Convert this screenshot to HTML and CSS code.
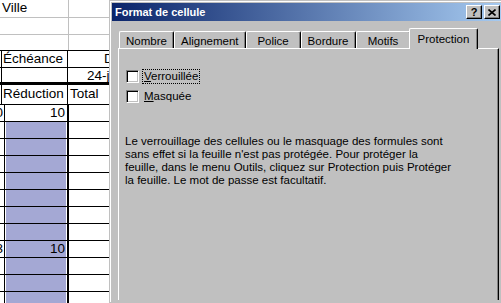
FILE: index.html
```html
<!DOCTYPE html>
<html lang="fr">
<head>
    <meta charset="UTF-8">
    <meta name="viewport" content="width=device-width, initial-scale=1.0">
    <title>Format de cellule</title>
    <link rel="stylesheet" href="styles.css">
</head>
<body>
    <div class="screen">
        <div class="sheet">
            <div class="row grey r1"><div class="cell a">Ville</div><div class="cell b"></div></div>
            <div class="row grey r2"><div class="cell a"></div><div class="cell b"></div></div>
            <div class="row grey r3"><div class="cell a"></div><div class="cell b"></div></div>
            <div class="row boxed r4"><div class="cell a">Échéance</div><div class="cell b date">Date</div></div>
            <div class="row boxed r5"><div class="cell a"></div><div class="cell b due">24-janv</div></div>
            <div class="row boxed r6"><div class="cell a">Réduction</div><div class="cell b">Total</div></div>
            <div class="row sel"><div class="cell pre">0</div><div class="cell a active">10</div><div class="cell b"></div></div>
            <div class="row sel"><div class="cell pre"></div><div class="cell a"></div><div class="cell b"></div></div>
            <div class="row sel"><div class="cell pre"></div><div class="cell a"></div><div class="cell b"></div></div>
            <div class="row sel"><div class="cell pre"></div><div class="cell a"></div><div class="cell b"></div></div>
            <div class="row sel"><div class="cell pre"></div><div class="cell a"></div><div class="cell b"></div></div>
            <div class="row sel"><div class="cell pre"></div><div class="cell a"></div><div class="cell b"></div></div>
            <div class="row sel"><div class="cell pre"></div><div class="cell a"></div><div class="cell b"></div></div>
            <div class="row sel"><div class="cell pre"></div><div class="cell a"></div><div class="cell b"></div></div>
            <div class="row sel"><div class="cell pre">3</div><div class="cell a">10</div><div class="cell b"></div></div>
            <div class="row sel"><div class="cell pre"></div><div class="cell a"></div><div class="cell b"></div></div>
            <div class="row sel"><div class="cell pre"></div><div class="cell a"></div><div class="cell b"></div></div>
            <div class="row sel"><div class="cell pre"></div><div class="cell a"></div><div class="cell b"></div></div>
        </div>

        <div class="dialog">
            <div class="titlebar">
                <span class="title">Format de cellule</span>
                <span class="caption-btn help-btn">?</span>
                <span class="caption-btn">
                    <svg width="8" height="7" viewBox="0 0 8 7"><path d="M0.5 0.5 L7.5 6.5 M7.5 0.5 L0.5 6.5" stroke="#000" stroke-width="1.6" fill="none"/></svg>
                </span>
            </div>
            <div class="tabs">
                <div class="tab">Nombre</div>
                <div class="tab">Alignement</div>
                <div class="tab">Police</div>
                <div class="tab">Bordure</div>
                <div class="tab">Motifs</div>
                <div class="tab current">Protection</div>
            </div>
            <div class="panel">
                <div class="check-row">
                    <span class="box"></span>
                    <span class="label focus"><u>V</u>errouillée</span>
                </div>
                <div class="check-row">
                    <span class="box"></span>
                    <span class="label"><u>M</u>asquée</span>
                </div>
                <p class="note">
                    Le verrouillage des cellules ou le masquage des formules sont<br>
                    sans effet si la feuille n'est pas protégée. Pour protéger la<br>
                    feuille, dans le menu Outils, cliquez sur Protection puis Protéger<br>
                    la feuille. Le mot de passe est facultatif.
                </p>
            </div>
        </div>
    </div>
</body>
</html>
```

FILE: styles.css
```css
body {
    margin: 0;
    background: #fff;
    overflow: hidden;
    font-family: 'Liberation Sans', Arial, sans-serif;
}
.screen {
    display: flex;
    width: 501px;
    height: 303px;
    overflow: hidden;
}

/* spreadsheet behind the dialog */
.sheet {
    flex: none;
    width: 109px;
    overflow: hidden;
    font-size: 13.5px;
    color: #000;
}
.row {
    display: flex;
    box-sizing: border-box;
    height: 17px;
    border-bottom: 1px solid #000;
}
.cell {
    flex: none;
    box-sizing: border-box;
    line-height: 16px;
    white-space: nowrap;
    overflow: hidden;
}
.cell.b {
    width: 70px;
    padding-left: 2px;
}
.row.grey {
    border-bottom-color: #c0c0c0;
}
.row.grey .a {
    width: 69px;
    padding-left: 2px;
    border-right: 1px solid #c0c0c0;
}
.row.r1 {
    height: 18px;
}
.row.r3 {
    height: 16px;
    border-bottom-color: #000;
}
.row.boxed {
    padding-left: 1px;
}
.row.boxed .a {
    width: 67px;
    padding-left: 1px;
    border-left: 1px solid #000;
    border-right: 1px solid #000;
}
.row.r5 {
    border-bottom-width: 3px;
}
.row.r6 {
    height: 20px;
}
.row.r6 .cell {
    line-height: 18px;
}
.b.date {
    padding-left: 36px;
}
.b.due {
    padding-left: 19px;
}
.cell.pre {
    width: 4px;
    display: flex;
    justify-content: flex-end;
    padding-right: 1px;
}
.row.sel .a {
    width: 65px;
    border-left: 1px solid #000;
    border-right: 2px solid #000;
    background: #a4a8d4;
    box-shadow: inset 1px 0 #fff, inset -1px 0 #fff;
    text-align: right;
    padding-right: 2px;
}
.row.sel .a.active {
    background: #fff;
}

/* dialog window */
.dialog {
    flex: none;
    width: 396px;
    box-sizing: border-box;
    display: flex;
    flex-direction: column;
    padding: 2px;
    background: #c0c0c0;
    border: 1px solid #c0c0c0;
    box-shadow: inset 1px 1px #fff;
    font-size: 11.5px;
    color: #000;
}
.titlebar {
    flex: none;
    display: flex;
    align-items: center;
    height: 18px;
    padding: 0 2px 0 3px;
    background: linear-gradient(to right, #0a246a, #a6caf0);
    color: #fff;
    font-size: 11px;
    font-weight: bold;
}
.title {
    flex: 1;
}
.caption-btn {
    width: 16px;
    height: 14px;
    box-sizing: border-box;
    display: flex;
    align-items: center;
    justify-content: center;
    background: #c0c0c0;
    border: 1px solid;
    border-color: #fff #000 #000 #fff;
    box-shadow: inset -1px -1px #808080;
    color: #000;
    font-size: 11px;
    line-height: 12px;
}
.help-btn {
    margin-right: 2px;
}
.tabs {
    flex: none;
    display: flex;
    align-items: flex-end;
    height: 20px;
    margin: 7px 0 0 6px;
    padding-left: 1px;
}
.tab {
    box-sizing: border-box;
    height: 17px;
    min-width: 55px;
    padding: 2px 6px 0;
    border: 1px solid #fff;
    border-bottom: none;
    border-right-color: #000;
    border-radius: 2px 2px 0 0;
    box-shadow: inset -1px 0 #808080;
    text-align: center;
    line-height: 14px;
    white-space: nowrap;
}
.tab.current {
    position: relative;
    height: 21px;
    margin: 0 -2px -1px;
    padding: 3px 8px 0;
    background: #c0c0c0;
}
.panel {
    flex: 1;
    margin: 0 3px 0 6px;
    padding: 20px 0 0 7px;
    border: 1px solid #fff;
    border-bottom: none;
    border-right-color: #000;
    box-shadow: inset -1px 0 #808080;
}
.check-row {
    display: flex;
    align-items: center;
    height: 15px;
    margin-bottom: 5px;
}
.box {
    flex: none;
    width: 13px;
    height: 13px;
    box-sizing: border-box;
    margin-right: 3px;
    background: #fff;
    border: 1px solid;
    border-color: #808080 #fff #fff #808080;
    box-shadow: inset 1px 1px #000, inset -1px -1px #c0c0c0;
}
.label {
    box-sizing: border-box;
    height: 15px;
    padding: 0 1px;
    line-height: 13px;
    border: 1px solid transparent;
}
.label.focus {
    border: 1px dotted #000;
}
.note {
    margin: 31px 0 0 -1px;
    line-height: 13px;
    white-space: nowrap;
}
```
